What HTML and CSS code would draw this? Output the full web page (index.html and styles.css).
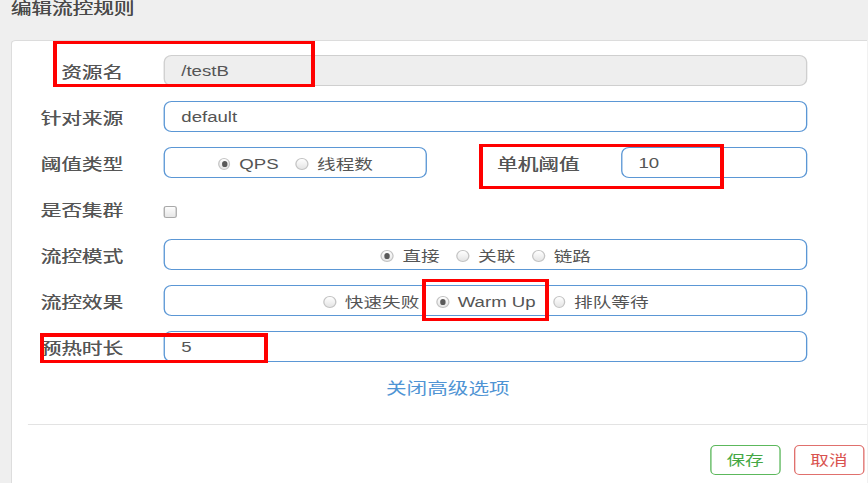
FILE: index.html
```html
<!DOCTYPE html>
<html lang="zh-CN">
<head>
<meta charset="utf-8">
<title>编辑流控规则</title>
<link rel="stylesheet" href="styles.css">
</head>
<body>
<div class="stage">
  <div class="modal-title">编辑流控规则</div>
  <div class="card">
    <div class="form">
      <div class="row">
        <label class="lbl">资源名</label>
        <div class="input input-disabled">/testB</div>
      </div>
      <div class="row">
        <label class="lbl">针对来源</label>
        <div class="input">default</div>
      </div>
      <div class="row">
        <label class="lbl">阈值类型</label>
        <div class="split">
          <div class="radio-box">
            <span class="opt"><span class="radio checked"></span>QPS</span>
            <span class="opt"><span class="radio"></span>线程数</span>
          </div>
          <label class="lbl lbl-inner">单机阈值</label>
          <div class="input">10</div>
        </div>
      </div>
      <div class="row">
        <label class="lbl">是否集群</label>
        <div class="check-cell"><span class="checkbox"></span></div>
      </div>
      <div class="row">
        <label class="lbl">流控模式</label>
        <div class="radio-box">
          <span class="opt"><span class="radio checked"></span>直接</span>
          <span class="opt"><span class="radio"></span>关联</span>
          <span class="opt"><span class="radio"></span>链路</span>
        </div>
      </div>
      <div class="row">
        <label class="lbl">流控效果</label>
        <div class="radio-box">
          <span class="opt"><span class="radio"></span>快速失败</span>
          <span class="opt"><span class="radio checked"></span>Warm Up</span>
          <span class="opt"><span class="radio"></span>排队等待</span>
        </div>
      </div>
      <div class="row">
        <label class="lbl">预热时长</label>
        <div class="input">5</div>
      </div>
    </div>
    <div class="advanced"><a class="link">关闭高级选项</a></div>
    <div class="divider"></div>
    <div class="footer">
      <button class="btn btn-save">保存</button>
      <button class="btn btn-cancel">取消</button>
    </div>
  </div>
</div>
<div class="mark mark-1"></div>
<div class="mark mark-2"></div>
<div class="mark mark-3"></div>
<div class="mark mark-4"></div>
</body>
</html>
```

FILE: styles.css
```css
html, body {
  margin: 0;
  padding: 0;
}
body {
  width: 868px;
  height: 483px;
  overflow: hidden;
  position: relative;
  background: #efefef;
  font-family: "Liberation Sans", "Noto Sans CJK SC", sans-serif;
  color: #555;
}
.stage {
  width: 652px;
  height: 483px;
  transform: scaleX(1.33);
  transform-origin: 0 0;
}
.modal-title {
  height: 40px;
  box-sizing: border-box;
  padding-left: 8px;
  padding-top: 0;
  font-size: 15.5px;
  line-height: 18px;
  font-weight: 400;
  color: #4a4a4a;
  text-shadow: 0.25px 0 0 #4a4a4a;
}
.card {
  margin-left: 7.5px;
  width: 644.5px;
  height: 443px;
  box-sizing: border-box;
  background: #fff;
  border: 1px solid #dcdcdc;
  border-right: none;
  border-bottom: none;
  border-radius: 4px 0 0 0;
}
.form {
  display: flex;
  flex-direction: column;
  gap: 15px;
  padding-top: 14px;
}
.row {
  display: grid;
  grid-template-columns: 114.8px 484.2px;
  height: 31px;
}
.lbl {
  display: block;
  text-align: right;
  padding-right: 30.8px;
  padding-top: 7px;
  font-size: 15.5px;
  line-height: 22px;
  font-weight: 400;
  color: #565656;
  text-shadow: 0.25px 0 0 #565656;
  white-space: nowrap;
}
.lbl-inner {
  padding-right: 31.4px;
}
.input {
  box-sizing: border-box;
  height: 31px;
  border: 1px solid #5b97d5;
  border-radius: 6px / 7px;
  padding: 0 12px;
  font-size: 14px;
  line-height: 30px;
  color: #555;
  background: #fff;
}
.input-disabled {
  background: #eeeeee;
  border-color: #cfcfcf;
}
.split {
  display: grid;
  grid-template-columns: 197.7px 146.1px 140.4px;
}
.radio-box {
  box-sizing: border-box;
  height: 31px;
  border: 1px solid #5b97d5;
  border-radius: 6px / 7px;
  display: flex;
  justify-content: center;
  align-items: center;
  gap: 12.8px;
  padding-top: 3px;
  font-size: 14px;
  color: #555;
}
.opt {
  display: flex;
  align-items: center;
  gap: 6.5px;
  line-height: 18px;
  white-space: nowrap;
}
.radio {
  box-sizing: border-box;
  width: 9.6px;
  height: 12px;
  border: 1px solid #c4c4c4;
  border-radius: 50%;
  background: linear-gradient(#ffffff, #e4e4e4);
  display: flex;
  align-items: center;
  justify-content: center;
}
.radio.checked::after {
  content: "";
  width: 4px;
  height: 5.2px;
  border-radius: 50%;
  background: #5a5a5a;
}
.check-cell {
  display: flex;
  align-items: flex-start;
  padding-top: 13px;
}
.checkbox {
  box-sizing: border-box;
  width: 9.8px;
  height: 12px;
  border: 1px solid #a9a9a9;
  border-radius: 2px;
  background: linear-gradient(#fdfdfd, #e6e6e6);
}
.advanced {
  margin-top: 16px;
  padding-left: 281.7px;
  line-height: 22px;
}
.link {
  font-size: 15.5px;
  color: #4f94d4;
  cursor: pointer;
}
.divider {
  margin-top: 24px;
  margin-left: 12.5px;
  height: 1px;
  background: #e3e3e3;
}
.footer {
  width: 641.1px;
  display: flex;
  justify-content: flex-end;
  gap: 10.5px;
  padding-top: 20px;
}
.btn {
  width: 52.6px;
  height: 30px;
  box-sizing: border-box;
  background: #fff;
  border: 1px solid;
  border-radius: 4px / 5px;
  padding: 0;
  font-family: "Liberation Sans", "Noto Sans CJK SC", sans-serif;
  font-size: 14px;
  line-height: 28px;
}
.btn-save {
  border-color: #5cb85c;
  color: #45a845;
}
.btn-cancel {
  border-color: #e0706d;
  color: #d9534f;
}
.mark {
  position: absolute;
  box-sizing: border-box;
  border: 4px solid #ff0000;
  border-top-width: 3.5px;
  border-bottom-width: 3.5px;
}
.mark-1 { left: 53px; top: 41px; width: 262px; height: 46px; }
.mark-2 { left: 479px; top: 144px; width: 245px; height: 45px; }
.mark-3 { left: 422px; top: 279px; width: 127px; height: 42px; }
.mark-4 { left: 40px; top: 333px; width: 228px; height: 30px; border-top-width: 4.5px; }
```
